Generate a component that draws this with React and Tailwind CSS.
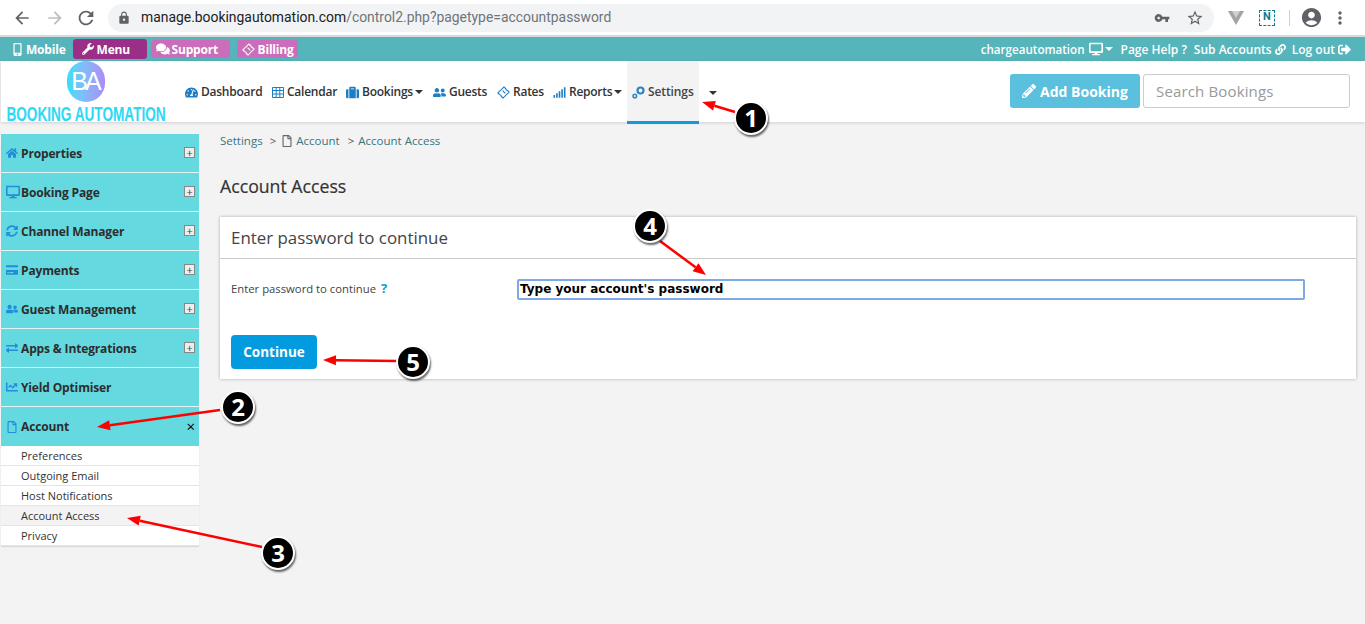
import {
  MdArrowBack,
  MdArrowForward,
  MdRefresh,
  MdLock,
  MdVpnKey,
  MdStarBorder,
  MdAccountCircle,
  MdMoreVert,
} from "react-icons/md";
import {
  FaMobileAlt,
  FaWrench,
  FaComments,
  FaTachometerAlt,
  FaSuitcase,
  FaUserFriends,
  FaSignal,
  FaPencilAlt,
  FaDesktop,
  FaLink,
  FaSignOutAlt,
  FaHome,
  FaSyncAlt,
  FaCreditCard,
  FaExchangeAlt,
  FaChartLine,
  FaRegFile,
} from "react-icons/fa";

const Caret = ({ className = "" }) => (
  <span
    className={`inline-block w-0 h-0 border-x-[4px] border-x-transparent border-t-[4px] border-t-[#333] ${className}`}
  />
);

// ticket outline, used for Billing and Rates
const Ticket = ({ className = "", size = 13 }) => (
  <svg className={className} width={size} height={size} viewBox="0 0 14 14" fill="none" stroke="currentColor" strokeWidth="1.2">
    <path d="M1 7.5 7.5 1l2 2a1.4 1.4 0 0 0 1.6 1.6L13 6.5 6.5 13l-2-2a1.4 1.4 0 0 0-1.6-1.6z" />
    <path d="m6 5 3 3" />
  </svg>
);

const GridIcon = ({ className = "" }) => (
  <svg className={className} width="12" height="11" viewBox="0 0 12 11" fill="none" stroke="currentColor" strokeWidth="1">
    <path d="M.5.5h11v10H.5zM.5 3.5h11M.5 7h11M4.2 .5v10M7.8 .5v10" />
  </svg>
);

const RingsIcon = ({ className = "" }) => (
  <svg className={className} width="13" height="13" viewBox="0 0 13 13" fill="none" stroke="currentColor">
    <circle cx="8.5" cy="4.5" r="3" strokeWidth="2.2" />
    <circle cx="2.8" cy="10" r="1.8" strokeWidth="1.5" />
  </svg>
);

const navItems = [
  { label: "Dashboard", Icon: FaTachometerAlt, w: "w-[87px]" },
  { label: "Calendar", Icon: GridIcon, w: "w-[74px]" },
  { label: "Bookings", Icon: FaSuitcase, w: "w-[87px]", caret: true },
  { label: "Guests", Icon: FaUserFriends, w: "w-[64px]" },
  { label: "Rates", Icon: Ticket, w: "w-[56px]" },
  { label: "Reports", Icon: FaSignal, w: "w-[74px]", caret: true },
];

const sideItems = [
  { label: "Properties", Icon: FaHome, plus: true, size: 12, gap: "mr-[3px]" },
  { label: "Booking Page", Icon: FaDesktop, plus: true, size: 14, gap: "mr-[1px]" },
  { label: "Channel Manager", Icon: FaSyncAlt, plus: true, size: 12, gap: "mr-[3px]" },
  { label: "Payments", Icon: FaCreditCard, plus: true, size: 12, gap: "mr-[3px]" },
  { label: "Guest Management", Icon: FaUserFriends, plus: true, size: 12, gap: "mr-[3px]" },
  { label: "Apps & Integrations", Icon: FaExchangeAlt, plus: true, size: 12, gap: "mr-[3px]" },
  { label: "Yield Optimiser", Icon: FaChartLine, size: 12, gap: "mr-[3px]" },
];

const subItems = [
  "Preferences",
  "Outgoing Email",
  "Host Notifications",
  "Account Access",
  "Privacy",
];

const arrows = [
  [735, 112, 702, 102],
  [220, 410, 97, 427],
  [262, 547, 127, 518],
  [660, 241, 706, 275],
  [397, 361, 323, 360],
];

const Badge = ({ n, className }) => (
  <div
    className={`absolute w-[34px] h-[34px] rounded-full bg-black border-2 border-white text-white flex items-center justify-center text-[24px] font-bold shadow-[1px_2px_2px_rgba(0,0,0,0.6)] ${className}`}
  >
    {n}
  </div>
);

const Arrows = () => (
  <svg className="absolute inset-0 pointer-events-none" width="1365" height="624">
    {arrows.map(([x1, y1, x2, y2], i) => {
      const a = Math.atan2(y2 - y1, x2 - x1);
      const bx = x2 - Math.cos(a) * 13;
      const by = y2 - Math.sin(a) * 13;
      const nx = -Math.sin(a) * 5;
      const ny = Math.cos(a) * 5;
      return (
        <g key={i}>
          <line x1={x1} y1={y1} x2={bx} y2={by} stroke="#f00" strokeWidth="2.5" />
          <polygon
            points={`${x2},${y2} ${bx + nx},${by + ny} ${bx - nx},${by - ny}`}
            fill="#f00"
          />
        </g>
      );
    })}
  </svg>
);

const BrowserBar = () => (
  <div className="h-[37px] bg-white border-b-2 border-[#d9d9d9] flex items-center font-['Roboto',sans-serif]">
    <MdArrowBack className="ml-[12px] text-[#5f6368]" size={20} />
    <MdArrowForward className="ml-[13px] text-[#bdbdbd]" size={20} />
    <MdRefresh className="ml-[10px] text-[#5f6368]" size={22} />
    <div className="ml-[11px] w-[1106px] h-[28px] rounded-full bg-[#f1f3f4] flex items-center">
      <MdLock className="ml-[9px] text-[#5f6368]" size={14} />
      <span className="ml-[10px] text-[13.9px] text-[#70757a]">
        <span className="text-[#202124]">manage.bookingautomation.com</span>
        /control2.php?pagetype=accountpassword
      </span>
      <MdVpnKey className="ml-auto text-[#5f6368]" size={16} />
      <MdStarBorder className="ml-[16px] mr-[10px] text-[#5f6368]" size={18} />
    </div>
    <svg className="ml-[14px]" width="16" height="14" viewBox="0 0 16 14">
      <path d="M0 0h16L8 14z" fill="#a3a3a3" />
      <path d="M4 0h8L8 7z" fill="#d0d0d0" />
    </svg>
    <div className="ml-[15px] w-[16px] h-[16px] border border-dashed border-[#0f7c8a] text-[#0f7c8a] text-[11px] font-bold flex items-center justify-center">
      N
    </div>
    <div className="ml-[14px] w-px h-[16px] bg-[#d0d0d0]" />
    <MdAccountCircle className="ml-[10px] text-[#5f6368]" size={23} />
    <MdMoreVert className="ml-[7px] text-[#5f6368]" size={20} />
  </div>
);

const TopBar = () => (
  <div className="h-[24px] bg-[#56b4bb] flex items-center text-white text-[12px] font-bold tracking-[-0.2px]">
    <FaMobileAlt className="ml-[11px]" size={13} />
    <span className="ml-[2px] pt-[1px]">Mobile</span>
    <div className="ml-[7px] w-[74px] h-[20px] rounded-[3px] bg-[#9b2f88] flex items-center pl-[9px] gap-[3px]">
      <FaWrench size={12} />
      <span className="pt-[1px]">Menu</span>
    </div>
    <div className="ml-[4px] w-[79px] h-[18px] rounded-[3px] bg-[#cc6dbb] flex items-center pl-[5px] gap-[2px]">
      <FaComments size={14} />
      <span className="pt-[1px]">Support</span>
    </div>
    <div className="ml-[7px] w-[61px] h-[18px] rounded-[3px] bg-[#cc6dbb] flex items-center pl-[5px] gap-[3px]">
      <Ticket size={13} />
      <span className="pt-[1px]">Billing</span>
    </div>
    <div className="ml-auto mr-[14px] flex items-center font-semibold tracking-normal">
      <span className="pt-[1px] text-[11.6px]">chargeautomation</span>
      <FaDesktop className="ml-[4px]" size={14} />
      <Caret className="ml-[2px] border-t-white" />
      <span className="ml-[8px] pt-[1px]">Page Help ?</span>
      <span className="ml-[7px] pt-[1px]">Sub Accounts</span>
      <FaLink className="ml-[3px]" size={11} />
      <span className="ml-[6px] pt-[1px]">Log out</span>
      <FaSignOutAlt className="ml-[3px]" size={13} />
    </div>
  </div>
);

const NavBar = () => (
  <div className="h-[61px] ml-px bg-white shadow-[0_1px_3px_rgba(0,0,0,0.15)] flex relative">
    <div className="w-[170px] mr-[14px] flex flex-col items-center shrink-0">
      <div className="w-[38px] h-[41px] rounded-full bg-gradient-to-r from-[#27e0fb] to-[#a98bf5] flex items-center justify-center text-white text-[25px] font-normal tracking-[-3px] pr-[2px] font-['Liberation_Sans',sans-serif]">
        BA
      </div>
      <div className="mt-[4px] text-[#2cd8f5] text-[20px] font-bold whitespace-nowrap leading-[16px] scale-x-[0.68] font-['Liberation_Sans',sans-serif]">
        BOOKING AUTOMATION
      </div>
    </div>
    <div className="flex items-center text-[12px] tracking-[-0.25px] font-semibold text-[#333] pt-[1px]">
      {navItems.map(({ label, Icon, w, caret }) => (
        <div key={label} className={`${w} flex items-center`}>
          <Icon className="text-[#1b7fc4] mr-[3px]" size={13} />
          <span>{label}</span>
          {caret && <Caret className="ml-[2px]" />}
        </div>
      ))}
    </div>
    <div className="w-[72px] h-[63px] bg-[#f3f3f3] border-b-[3px] border-[#0c9bdc] flex items-center pl-[5px] text-[12px] tracking-[-0.1px] font-semibold text-[#444] pt-[2px]">
      <RingsIcon className="text-[#2a85c9] mr-[3px]" />
      Settings
    </div>
    <div className="ml-[10px] flex items-center">
      <Caret className="mt-[3px]" />
    </div>
    <div className="ml-auto mr-[15px] mt-[13px] flex gap-[3px]">
      <div className="w-[130px] h-[34px] rounded-[3px] bg-[#5bc0de] text-white font-bold text-[14px] flex items-center justify-center gap-[4px]">
        <FaPencilAlt size={14} />
        Add Booking
      </div>
      <div className="w-[207px] h-[34px] rounded-[3px] border border-[#ccc] bg-white text-[#999] text-[15px] tracking-[0.15px] flex items-center pl-[12px]">
        Search Bookings
      </div>
    </div>
  </div>
);

const SideRow = ({ label, Icon, plus, size, gap }) => (
  <div className="h-[39px] bg-[#65d9e0] border-b border-[#e4f3f4] flex items-center pl-[5px] pr-[4px] text-[12px] tracking-[-0.15px] font-bold text-[#2d2d2d]">
    <Icon className={`text-[#1f8fd9] shrink-0 ${gap}`} size={size} />
    <span className="pt-[2px]">{label}</span>
    {plus && (
      <span className="ml-auto mb-[2px] w-[11px] h-[11px] border border-[#888] bg-[#eee] text-[#444] flex items-center justify-center text-[11px] leading-none font-normal">
        +
      </span>
    )}
  </div>
);

const Sidebar = () => (
  <div className="w-[198px] ml-px shrink-0 mt-[12px]">
    {sideItems.map((item) => (
      <SideRow key={item.label} {...item} />
    ))}
    <div className="h-[39px] bg-[#65d9e0] flex items-center pl-[5px] pr-[3px] text-[12px] tracking-[-0.15px] font-bold text-[#2d2d2d]">
      <FaRegFile className="text-[#1f8fd9] mr-[3px]" size={12} />
      <span className="pt-[1px]">Account</span>
      <span className="ml-auto text-black text-[15px] font-normal leading-none pr-[1px]">×</span>
    </div>
    <div className="shadow-[0_1px_1px_rgba(0,0,0,0.1)]">
      {subItems.map((s) => (
        <div
          key={s}
          className={`h-[20px] pl-[20px] pt-[1px] flex items-center text-[11px] text-[#333] border-b border-[#e5e5e5] ${
            s === "Account Access" ? "bg-[#f3f3f3]" : "bg-white"
          }`}
        >
          {s}
        </div>
      ))}
    </div>
  </div>
);

const Main = () => (
  <div className="flex-1 pl-[21px] pr-[9px]">
    <div className="mt-[10px] h-[18px] flex items-center text-[11.5px] text-[#3b7480]">
      Settings
      <span className="ml-[7px] text-[#555]">&gt;</span>
      <FaRegFile className="ml-[5px] mr-[3px] text-[#666]" size={12} />
      Account
      <span className="ml-[8px] text-[#555]">&gt;</span>
      <span className="ml-[4px]">Account Access</span>
    </div>
    <h1 className="mt-[24px] h-[24px] leading-[24px] text-[17.7px] font-normal text-[#333] [-webkit-text-stroke:0.2px_#333]">
      Account Access
    </h1>
    <div className="mt-[19px] h-[162px] bg-white shadow-[0_0_3px_rgba(0,0,0,0.3)]">
      <div className="h-[42px] pl-[11px] border-b border-[#ccc] flex items-center text-[16.9px] text-[#444]">
        Enter password to continue
      </div>
      <div className="mt-[20px] h-[21px] flex items-center pl-[11px]">
        <span className="w-[286px] text-[11.3px] text-[#444] mb-[2px]">
          Enter password to continue
          <span className="ml-[5px] text-[#0c9bdc] font-bold text-[13px]">?</span>
        </span>
        <div className="w-[788px] h-[21px] border-2 border-[#7fa8e6] rounded-[2px] pl-[1px] pb-[1px] flex items-center text-[12px] font-bold text-black font-['DejaVu_Sans',sans-serif]">
          Type your account's password
        </div>
      </div>
      <div className="mt-[35px] ml-[11px] w-[86px] h-[34px] rounded-[4px] bg-[#039be0] text-white font-bold text-[13.5px] flex items-center justify-center">
        Continue
      </div>
    </div>
  </div>
);

export default function App() {
  return (
    <div className="relative w-[1365px] h-[624px] overflow-hidden bg-[#f3f3f3] font-['Open_Sans',sans-serif]">
      <BrowserBar />
      <TopBar />
      <NavBar />
      <div className="flex">
        <Sidebar />
        <Main />
      </div>
      <Arrows />
      <Badge n="1" className="left-[734px] top-[101px]" />
      <Badge n="2" className="left-[221px] top-[390px]" />
      <Badge n="3" className="left-[261px] top-[536px]" />
      <Badge n="4" className="left-[633px] top-[209px]" />
      <Badge n="5" className="left-[396px] top-[345px]" />
    </div>
  );
}
